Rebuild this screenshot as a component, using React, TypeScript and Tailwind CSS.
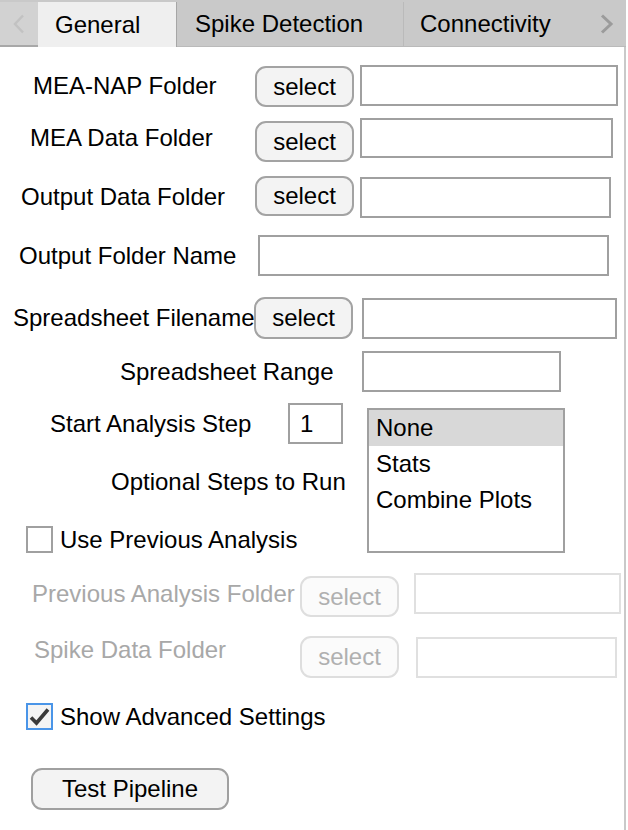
import React from "react";

function Btn({ w, h, disabled, className = "" }: { w: string; h: string; disabled?: boolean; className?: string }) {
  return (
    <div
      className={`${w} ${h} ${className} shrink-0 rounded-[11px] border-2 flex items-center justify-center ${
        disabled ? "border-[#dedede] bg-[#fbfbfb] text-[#b0b0b0]" : "border-[#a3a3a3] bg-[#f3f3f3] text-black"
      }`}
    >
      select
    </div>
  );
}

function Box({ cls, disabled }: { cls: string; disabled?: boolean }) {
  return <div className={`${cls} shrink-0 border-2 bg-white ${disabled ? "border-[#e0e0e0]" : "border-[#a0a0a0]"}`} />;
}

export default function App() {
  return (
    <div className="w-[628px] h-[830px] bg-white text-[24px] leading-[28px] text-black overflow-hidden font-['Liberation_Sans',Arial,sans-serif]">
      {/* Tab bar */}
      <div className="flex h-[47px] w-[626px] bg-[#c9c9c9] pt-[2px]">
        <div className="w-[38px] bg-[#d2d2d2] border-b-2 border-[#a8a8a8] flex items-center justify-center">
          <svg width="12" height="20" viewBox="0 0 12 20">
            <polyline points="10,1.5 2,10 10,18.5" fill="none" stroke="#c2c2c2" strokeWidth="2.5" />
          </svg>
        </div>
        <div className="w-[139px] bg-[#efefef] border-r border-[#a6a6a6] pl-[17px] flex items-center">General</div>
        <div className="w-[227px] border-r border-[#a6a6a6] border-b border-[#bababa] pl-[18px] flex items-center">
          Spike Detection
        </div>
        <div className="flex-1 border-b border-[#bababa] pl-[16px] pr-[12px] flex items-center justify-between">
          <span>Connectivity</span>
          <svg width="14" height="20" viewBox="0 0 14 20">
            <polyline points="2,1.5 11,10 2,18.5" fill="none" stroke="#9b9b9b" strokeWidth="3" />
          </svg>
        </div>
      </div>

      {/* Content */}
      <div className="w-[626px] h-[783px] border-r-2 border-[#c9c9c9] flex flex-col">
        {/* Row 1 */}
        <div className="flex items-start h-[42px] mt-[18px]">
          <div className="w-[255px] pl-[33px] mt-[7px] whitespace-nowrap">MEA-NAP Folder</div>
          <Btn w="w-[99px]" h="h-[41px]" className="mt-[1px]" />
          <Box cls="ml-[6px] w-[258px] h-[41px]" />
        </div>
        {/* Row 2 */}
        <div className="flex items-start h-[44px] mt-[11px]">
          <div className="w-[255px] pl-[30px] mt-[6px] whitespace-nowrap">MEA Data Folder</div>
          <Btn w="w-[99px]" h="h-[41px]" className="mt-[3px]" />
          <Box cls="ml-[6px] w-[253px] h-[40px]" />
        </div>
        {/* Row 3 */}
        <div className="flex items-start h-[42px] mt-[14px]">
          <div className="w-[255px] pl-[21px] mt-[7px] whitespace-nowrap">Output Data Folder</div>
          <Btn w="w-[99px]" h="h-[40px]" />
          <Box cls="ml-[6px] w-[251px] h-[41px] mt-[1px]" />
        </div>
        {/* Row 4 */}
        <div className="flex items-start h-[41px] mt-[17px]">
          <div className="w-[258px] pl-[19px] mt-[7px] whitespace-nowrap">Output Folder Name</div>
          <Box cls="w-[351px] h-[41px]" />
        </div>
        {/* Row 5 */}
        <div className="flex items-start h-[42px] mt-[21px]">
          <div className="w-[254px] pl-[13px] mt-[7px] whitespace-nowrap">Spreadsheet Filename</div>
          <Btn w="w-[99px]" h="h-[42px]" />
          <Box cls="ml-[9px] w-[255px] h-[41px] mt-[1px]" />
        </div>
        {/* Row 6 */}
        <div className="flex items-start h-[41px] mt-[12px]">
          <div className="w-[362px] pl-[120px] mt-[7px] whitespace-nowrap">Spreadsheet Range</div>
          <Box cls="w-[199px] h-[41px]" />
        </div>
        {/* Block */}
        <div className="flex items-start h-[150px] mt-[11px]">
          <div className="w-[367px] flex flex-col">
            <div className="flex items-start h-[41px]">
              <div className="w-[288px] pl-[50px] mt-[7px] whitespace-nowrap">Start Analysis Step</div>
              <div className="w-[55px] h-[41px] border-2 border-[#a0a0a0] pl-[10px] flex items-center">1</div>
            </div>
            <div className="pl-[111px] mt-[24px] whitespace-nowrap">Optional Steps to Run</div>
            <div className="flex items-center h-[27px] mt-[30px]">
              <div className="ml-[26px] w-[27px] h-[27px] border-2 border-[#a0a0a0] bg-white" />
              <div className="ml-[7px] whitespace-nowrap">Use Previous Analysis</div>
            </div>
          </div>
          <div className="mt-[5px] w-[198px] h-[145px] border-2 border-[#a0a0a0] flex flex-col">
            <div className="h-[36px] bg-[#d8d8d8] pl-[7px] flex items-center">None</div>
            <div className="h-[36px] pl-[7px] flex items-center">Stats</div>
            <div className="h-[36px] pl-[7px] flex items-center">Combine Plots</div>
          </div>
        </div>
        {/* Previous Analysis Folder */}
        <div className="flex items-start h-[44px] mt-[20px]">
          <div className="w-[300px] pl-[32px] mt-[7px] whitespace-nowrap text-[#a8a8a8]">Previous Analysis Folder</div>
          <Btn w="w-[99px]" h="h-[41px]" className="mt-[3px]" disabled />
          <Box cls="ml-[15px] w-[207px] h-[41px]" disabled />
        </div>
        {/* Spike Data Folder */}
        <div className="flex items-start h-[42px] mt-[19px]">
          <div className="w-[300px] pl-[34px] whitespace-nowrap text-[#a8a8a8]">Spike Data Folder</div>
          <Btn w="w-[99px]" h="h-[42px]" disabled />
          <Box cls="ml-[17px] w-[201px] h-[41px] mt-[1px]" disabled />
        </div>
        {/* Show Advanced Settings */}
        <div className="flex items-center h-[27px] mt-[25px]">
          <div className="ml-[26px] w-[27px] h-[27px] border-2 border-[#4a95e8] bg-[#f4f4f4] flex items-center justify-center">
            <svg width="21" height="19" viewBox="0 0 21 19">
              <path d="M2 10.5 L7.5 16 L19 2.5" fill="none" stroke="#3a3a3a" strokeWidth="3.6" strokeLinejoin="miter" />
            </svg>
          </div>
          <div className="ml-[7px] whitespace-nowrap">Show Advanced Settings</div>
        </div>
        {/* Test Pipeline */}
        <div className="mt-[38px] ml-[31px] w-[198px] h-[42px] rounded-[11px] border-2 border-[#a0a0a0] bg-[#f3f3f3] flex items-center justify-center">
          Test Pipeline
        </div>
      </div>
    </div>
  );
}
